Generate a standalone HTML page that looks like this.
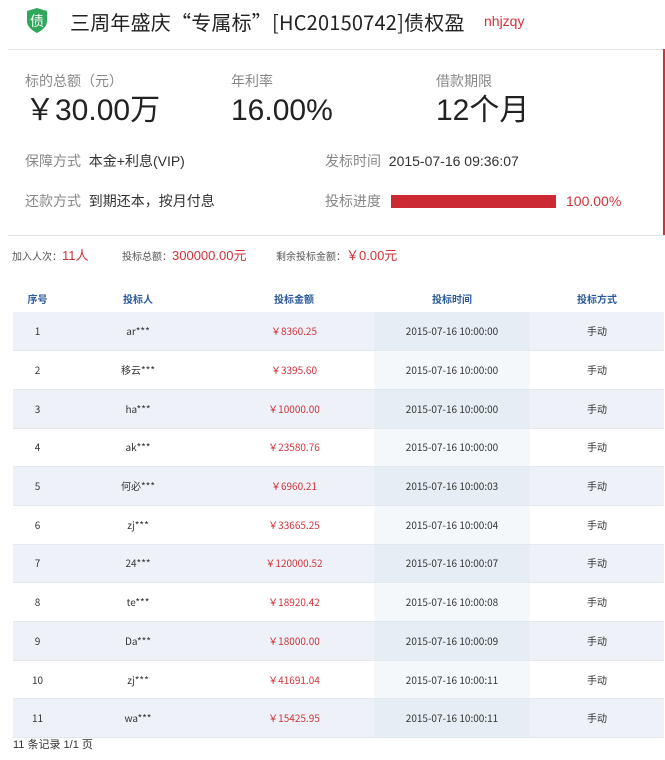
<!DOCTYPE html>
<html><head><meta charset="utf-8"><style>
*{margin:0;padding:0;box-sizing:border-box}
body{width:665px;height:760px;background:#fff;font-family:"Liberation Sans","Noto Sans CJK SC",sans-serif;color:#333;position:relative;overflow:hidden}
.a{position:absolute;white-space:nowrap;line-height:1}
.g{color:#888}
.r{color:#d0323a}
table{position:absolute;left:13px;top:285px;width:651px;border-collapse:collapse;font-size:10px;font-family:"Noto Sans CJK SC",sans-serif}
th{height:27px;color:#2a5a9a;font-weight:bold;font-size:10px;line-height:12px;vertical-align:middle}
td{height:38.7px;text-align:center;border-bottom:1px solid #e4e8ee;color:#333;line-height:12px;vertical-align:middle}
tbody tr:nth-child(odd) td{background:#eef2f8}
tbody tr:nth-child(odd) td.t{background:#e6edf5}
tbody tr:nth-child(even) td.t{background:#f5f8fb}
td.m{color:#d0323a}
</style></head><body>
<svg class="a" style="left:26px;top:8px" width="22" height="25" viewBox="0 0 22 25"><path d="M1 3 L11 0 L21 3 L21 13 Q21 20 11 25 Q1 20 1 13 Z" fill="#2fa85c"/><text x="11" y="18" font-size="14" fill="#fff" text-anchor="middle" font-family="Noto Sans CJK SC,sans-serif">债</text></svg>
<div class="a" style="left:70px;top:11px;font-size:20px;color:#222;font-family:'Noto Sans CJK SC',sans-serif;line-height:22px;letter-spacing:0.2px">三周年盛庆“专属标”[HC20150742]债权盈</div>
<div class="a r" style="left:484px;top:14px;font-size:14px">nhjzqy</div>
<div class="a" style="left:8px;top:49px;width:657px;height:1px;background:#e4e4e4"></div>
<div class="a" style="left:663px;top:49px;width:2px;height:187px;background:#d0323a"></div>
<div class="a" style="left:8px;top:235px;width:657px;height:1px;background:#e4e4e4"></div>
<div class="a g" style="left:25px;top:74px;font-size:14px">标的总额（元）</div>
<div class="a g" style="left:231px;top:74px;font-size:14px">年利率</div>
<div class="a g" style="left:436px;top:74px;font-size:14px">借款期限</div>
<div class="a" style="left:25px;top:96px;font-size:30px;color:#222">￥30.00万</div>
<div class="a" style="left:231px;top:96px;font-size:30px;color:#222">16.00%</div>
<div class="a" style="left:436px;top:96px;font-size:30px;color:#222">12个月</div>
<div class="a" style="left:25px;top:154px;font-size:14px"><span class="g">保障方式</span>&nbsp; 本金+利息(VIP)</div>
<div class="a" style="left:325px;top:154px;font-size:14px"><span class="g">发标时间</span>&nbsp; 2015-07-16 09:36:07</div>
<div class="a" style="left:25px;top:194px;font-size:14px"><span class="g">还款方式</span>&nbsp; 到期还本，按月付息</div>
<div class="a g" style="left:325px;top:194px;font-size:14px">投标进度</div>
<div class="a" style="left:391px;top:195px;width:165px;height:13px;background:#cc2a33"></div>
<div class="a r" style="left:566px;top:194px;font-size:14px">100.00%</div>
<div class="a" style="left:12px;top:249px;font-size:10px;color:#555">加入人次：<span class="r" style="font-size:13px">11人</span></div>
<div class="a" style="left:122px;top:249px;font-size:10px;color:#555">投标总额：<span class="r" style="font-size:13px">300000.00元</span></div>
<div class="a" style="left:276px;top:249px;font-size:10px;color:#555">剩余投标金额：<span class="r" style="font-size:13px">￥0.00元</span></div>
<table>
<colgroup><col style="width:49px"><col style="width:152px"><col style="width:160px"><col style="width:156px"><col style="width:134px"></colgroup>
<thead><tr><th>序号</th><th>投标人</th><th>投标金额</th><th>投标时间</th><th>投标方式</th></tr></thead>
<tbody>
<tr><td>1</td><td>ar***</td><td class="m">￥8360.25</td><td class="t">2015-07-16 10:00:00</td><td>手动</td></tr>
<tr><td>2</td><td>移云***</td><td class="m">￥3395.60</td><td class="t">2015-07-16 10:00:00</td><td>手动</td></tr>
<tr><td>3</td><td>ha***</td><td class="m">￥10000.00</td><td class="t">2015-07-16 10:00:00</td><td>手动</td></tr>
<tr><td>4</td><td>ak***</td><td class="m">￥23580.76</td><td class="t">2015-07-16 10:00:00</td><td>手动</td></tr>
<tr><td>5</td><td>何必***</td><td class="m">￥6960.21</td><td class="t">2015-07-16 10:00:03</td><td>手动</td></tr>
<tr><td>6</td><td>zj***</td><td class="m">￥33665.25</td><td class="t">2015-07-16 10:00:04</td><td>手动</td></tr>
<tr><td>7</td><td>24***</td><td class="m">￥120000.52</td><td class="t">2015-07-16 10:00:07</td><td>手动</td></tr>
<tr><td>8</td><td>te***</td><td class="m">￥18920.42</td><td class="t">2015-07-16 10:00:08</td><td>手动</td></tr>
<tr><td>9</td><td>Da***</td><td class="m">￥18000.00</td><td class="t">2015-07-16 10:00:09</td><td>手动</td></tr>
<tr><td>10</td><td>zj***</td><td class="m">￥41691.04</td><td class="t">2015-07-16 10:00:11</td><td>手动</td></tr>
<tr><td>11</td><td>wa***</td><td class="m">￥15425.95</td><td class="t">2015-07-16 10:00:11</td><td>手动</td></tr>
</tbody></table>
<div class="a" style="left:13px;top:740px;font-size:11px;color:#333">11 条记录 1/1 页</div>
</body></html>
